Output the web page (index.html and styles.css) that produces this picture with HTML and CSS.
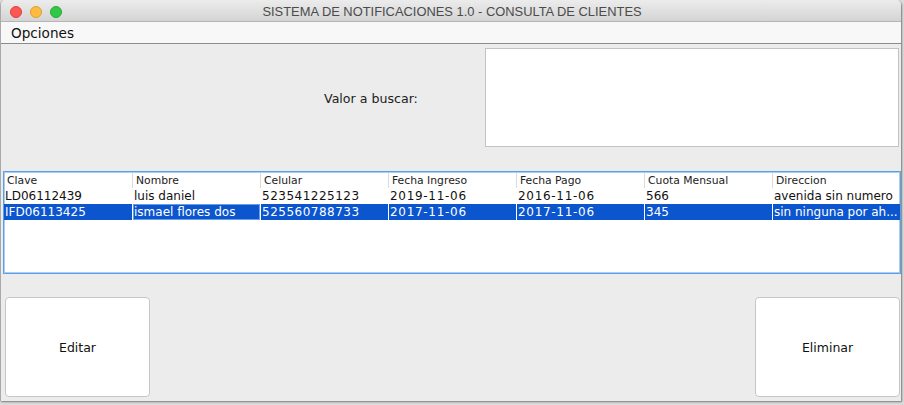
FILE: index.html
```html
<!DOCTYPE html>
<html>
<head>
<meta charset="utf-8">
<link rel="stylesheet" href="styles.css">
</head>
<body>
<div class="window">
  <div class="titlebar">
    <div class="lights">
      <span class="light red"></span>
      <span class="light yellow"></span>
      <span class="light green"></span>
    </div>
    <div class="title">SISTEMA DE NOTIFICACIONES 1.0 - CONSULTA DE CLIENTES</div>
  </div>
  <div class="menubar"><span class="menu">Opciones</span></div>
  <div class="content">
    <div class="search">
      <span class="label">Valor a buscar:</span>
      <div class="field"></div>
    </div>
    <div class="tablepane">
      <div class="row head">
        <div class="cell">Clave</div>
        <div class="cell">Nombre</div>
        <div class="cell">Celular</div>
        <div class="cell">Fecha Ingreso</div>
        <div class="cell">Fecha Pago</div>
        <div class="cell">Cuota Mensual</div>
        <div class="cell">Direccion</div>
      </div>
      <div class="row">
        <div class="cell">LD06112439</div>
        <div class="cell">luis daniel</div>
        <div class="cell phone">523541225123</div>
        <div class="cell date">2019-11-06</div>
        <div class="cell date">2016-11-06</div>
        <div class="cell">566</div>
        <div class="cell">avenida sin numero</div>
      </div>
      <div class="row selected">
        <div class="cell">IFD06113425</div>
        <div class="cell focus">ismael flores dos</div>
        <div class="cell phone">525560788733</div>
        <div class="cell date">2017-11-06</div>
        <div class="cell date">2017-11-06</div>
        <div class="cell">345</div>
        <div class="cell">sin ninguna por ah...</div>
      </div>
    </div>
    <div class="buttons">
      <div class="btn">Editar</div>
      <div class="btn">Eliminar</div>
    </div>
  </div>
</div>
</body>
</html>
```
FILE: styles.css
```css
html, body {
  margin: 0;
  padding: 0;
}
body {
  width: 904px;
  height: 405px;
  background: #dcdcdc;
  overflow: hidden;
  font-family: "DejaVu Sans", sans-serif;
}
.window {
  width: 900px;
  height: 401px;
  background: #ececec;
  border-left: 1px solid #a9a9a9;
  border-radius: 5px 5px 0 0;
  box-shadow: 1px 1px 2px rgba(0,0,0,0.45);
  overflow: hidden;
  display: flex;
  flex-direction: column;
}
.titlebar {
  height: 22px;
  box-sizing: border-box;
  background: linear-gradient(#ececec, #d4d4d4);
  border-bottom: 1px solid #b5b5b5;
  position: relative;
  display: flex;
  align-items: center;
  justify-content: center;
}
.lights {
  position: absolute;
  left: 9px;
  top: 6px;
  display: flex;
  gap: 8px;
}
.light {
  width: 12px;
  height: 12px;
  border-radius: 50%;
  box-sizing: border-box;
}
.red { background: #fc5753; border: 1px solid #df3d39; }
.yellow { background: #fdbc40; border: 1px solid #de9f34; }
.green { background: #33c748; border: 1px solid #27aa35; }
.title {
  font-family: "Liberation Sans", sans-serif;
  font-size: 12.9px;
  color: #4b4b4b;
  margin-left: 2px;
  padding-top: 1px;
}
.menubar {
  height: 22px;
  box-sizing: border-box;
  background: #f8f8f8;
  border-bottom: 1px solid #8c8c8c;
  display: flex;
  align-items: center;
  padding-left: 10px;
}
.menu {
  font-size: 13.6px;
  color: #111;
  padding-top: 1px;
}
.content {
  flex: 1;
  display: flex;
  flex-direction: column;
}
.search {
  display: flex;
  align-items: center;
  padding: 4px 2px 0 0;
}
.label {
  font-size: 12.6px;
  color: #222;
  margin-left: 323px;
  padding-top: 2px;
}
.field {
  margin-left: auto;
  width: 414px;
  height: 99px;
  box-sizing: border-box;
  background: #fff;
  border: 1px solid #c2c2c2;
}
.tablepane {
  margin: 24px 0 0 2px;
  width: 898px;
  height: 103px;
  box-sizing: border-box;
  background: #fff;
  border: 1px solid #5a9fe8;
  box-shadow: inset 0 0 0 1px #a9cdf5;
  padding: 1px 0 0 0;
}
.row {
  display: grid;
  grid-template-columns: repeat(7, 128px);
  height: 16px;
  font-size: 12px;
  color: #111;
}
.cell {
  box-sizing: border-box;
  padding-left: 1px;
  line-height: 16px;
  white-space: nowrap;
  overflow: hidden;
  border-left: 1px solid transparent;
}
.cell.phone { letter-spacing: 0.5px; }
.cell.date { letter-spacing: 0.7px; }
.row .cell:first-child { border-left: none; padding-left: 1px; }
.head {
  height: 15px;
  font-size: 10.8px;
  color: #222;
}
.head .cell {
  line-height: 15px;
  border-left: 1px solid #dadada;
  padding-left: 3px;
}
.head .cell:first-child { padding-left: 3px; }
.selected {
  background: #0b55cf;
  color: #fff;
}
.selected .cell {
  border-left: 1px solid #fff;
}
.selected .cell.focus {
  box-shadow: inset 0 0 0 1px #6a9ce6;
}
.buttons {
  display: flex;
  justify-content: space-between;
  padding: 23px 1px 0 4px;
}
.btn {
  width: 145px;
  height: 100px;
  box-sizing: border-box;
  background: #fff;
  border: 1px solid #c6c6c6;
  border-radius: 4px;
  display: flex;
  align-items: center;
  justify-content: center;
  font-size: 12.5px;
  color: #111;
}
```
